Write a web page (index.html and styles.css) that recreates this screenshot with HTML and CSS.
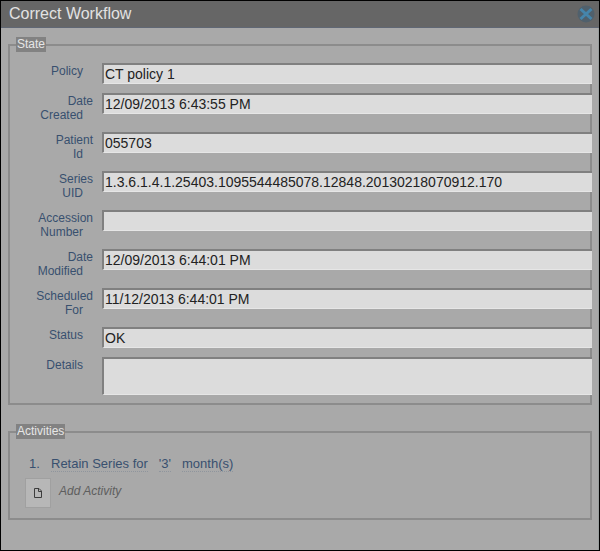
FILE: index.html
```
<!DOCTYPE html>
<html lang="en">
<head>
<meta charset="utf-8">
<meta name="viewport" content="width=device-width, initial-scale=1">
<title>Correct Workflow</title>
<link rel="stylesheet" href="styles.css">
</head>
<body>
	<form class="dialog">
		<header class="titlebar">
			<h1>Correct Workflow</h1>
			<button type="button" class="close" aria-label="Close">
				<svg width="18" height="18" viewBox="0 0 18 18">
					<circle cx="9" cy="9" r="8.5" fill="#50606c"/>
					<path d="M3.5 4 L14.5 14 M14.5 4 L3.5 14" stroke="#4585ab" stroke-width="3"/>
				</svg>
			</button>
		</header>

		<div class="content">
			<fieldset class="state">
				<legend>State</legend>
				<div class="fields">
					<div class="row">
						<div class="caption"><label for="policy">Policy</label></div>
						<input id="policy" type="text" value="CT policy 1">
					</div>
					<div class="row">
						<div class="caption"><label for="created">Date Created</label></div>
						<input id="created" type="text" value="12/09/2013 6:43:55 PM">
					</div>
					<div class="row">
						<div class="caption"><label for="patient">Patient Id</label></div>
						<input id="patient" type="text" value="055703">
					</div>
					<div class="row">
						<div class="caption"><label for="series">Series UID</label></div>
						<input id="series" type="text" value="1.3.6.1.4.1.25403.1095544485078.12848.20130218070912.170">
					</div>
					<div class="row">
						<div class="caption"><label for="accession">Accession Number</label></div>
						<input id="accession" type="text" value="">
					</div>
					<div class="row">
						<div class="caption"><label for="modified">Date Modified</label></div>
						<input id="modified" type="text" value="12/09/2013 6:44:01 PM">
					</div>
					<div class="row">
						<div class="caption"><label for="scheduled">Scheduled For</label></div>
						<input id="scheduled" type="text" value="11/12/2013 6:44:01 PM">
					</div>
					<div class="row">
						<div class="caption"><label for="status">Status</label></div>
						<input id="status" type="text" value="OK">
					</div>
					<div class="row">
						<div class="caption"><label for="details">Details</label></div>
						<textarea id="details"></textarea>
					</div>
				</div>
			</fieldset>

			<fieldset class="activities">
				<legend>Activities</legend>
				<div class="activity">
					<span class="number">1.</span>
					<a href="#">Retain Series for</a>
					<a href="#">'3'</a>
					<a href="#">month(s)</a>
				</div>
				<div class="add">
					<button type="button" id="add" aria-labelledby="addText">
						<svg width="10" height="10" viewBox="0 0 10 10" fill="none" stroke="#3c3c3c">
							<path d="M1.5 0.5 H6 L8.5 3 V9.5 H1.5 Z"/>
							<path d="M5.5 0.5 V3.5 H8.5"/>
						</svg>
					</button>
					<label id="addText" for="add">Add Activity</label>
				</div>
			</fieldset>
		</div>
	</form>
</body>
</html>
```
FILE: styles.css
```
:root {
	--bg:#a9a9a9;
	--line:#8c8c8c;
	--navy:#38506f;
	--field:#dcdcdc;
}

* {
	box-sizing:border-box;
	font-family:"Liberation Sans", Arial, sans-serif;
}

body {
	margin:0;
}

.dialog {
	display:flex;
	flex-direction:column;
	min-height:100vh;
	border:1px solid #000;
	background-color:var(--bg);
}

.titlebar {
	display:flex;
	align-items:center;
	justify-content:space-between;
	height:27px;
	padding:0 4px 0 8px;
	background-color:#666666;
	border-bottom:1px solid #606774;
}

.titlebar h1 {
	margin:0;
	font-size:16px;
	font-weight:normal;
	line-height:24px;
	color:#e2e2e2;
}

.close {
	display:flex;
	padding:0;
	border:none;
	background:none;
}

.content {
	flex:1;
	display:flex;
	flex-direction:column;
	gap:19px;
	padding:9px 6px 30px 7px;
	border-right:1px solid #999e9e;
}

fieldset {
	min-width:0;
	margin:0;
	padding:0;
	border:2px solid var(--line);
}

legend {
	margin-left:6px;
	padding:0 1px;
	font-size:12px;
	line-height:15px;
	color:#e6e6e6;
	background-color:#828282;
}

/* the boxes run over the right border of the fieldset */
.fields {
	display:flex;
	flex-direction:column;
	gap:9px;
	margin-right:-2px;
	padding:11px 0 8px 23px;
}

.row {
	display:grid;
	grid-template-columns:60px 1fr;
	column-gap:9px;
	align-items:start;
}

.caption {
	font-size:12px;
	line-height:14px;
	text-align:right;
	color:var(--navy);
	padding:1px 0;
}

.caption label {
	padding-right:10px;
}

input, textarea {
	display:block;
	width:100%;
	height:21px;
	margin:0;
	padding:0 1px;
	border:solid;
	border-width:2px 0 1px 2px;
	border-color:#808080 #e6e6e6 #e6e6e6 #808080;
	background-color:var(--field);
	font-size:14px;
	color:#222;
}

textarea {
	height:38px;
	resize:none;
}

.activity {
	display:flex;
	gap:11px;
	padding:17px 0 0 19px;
	font-size:13px;
	line-height:15px;
	color:var(--navy);
}

.number {
	width:11px;
}

.activity a {
	color:var(--navy);
	text-decoration:none;
	border-bottom:1px dotted #8f959d;
}

.add {
	display:flex;
	align-items:center;
	gap:8px;
	padding:6px 0 10px 15px;
	font-size:12px;
	font-style:italic;
	color:#5e5e5e;
}

.add button {
	display:flex;
	align-items:center;
	justify-content:center;
	width:26px;
	height:30px;
	padding:0;
	border:1px solid #a0a0a0;
	background-color:#b7b7b7;
}

.add label {
	padding-bottom:4px;
}
```
